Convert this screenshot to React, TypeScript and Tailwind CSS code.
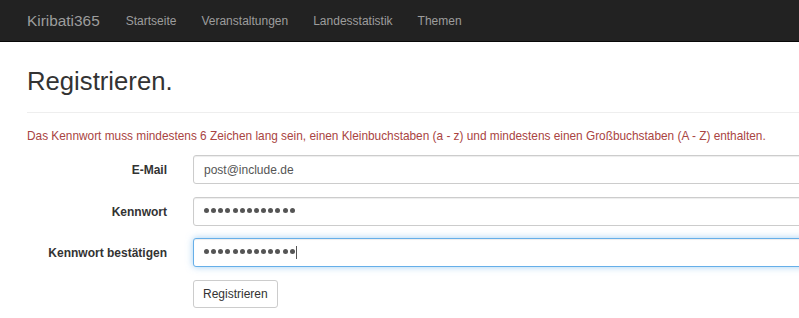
const navLinks = ['Startseite', 'Veranstaltungen', 'Landesstatistik', 'Themen']

function Dots({ count }: { count: number }) {
  return (
    <div className="flex items-center gap-[2.15px] -mt-[3px]">
      {Array.from({ length: count }).map((_, i) => (
        <span key={i} className="block w-[5px] h-[5px] rounded-full bg-[#555]" />
      ))}
    </div>
  )
}

function Field({
  label,
  focused,
  children,
  className,
}: {
  label: string
  focused?: boolean
  children: React.ReactNode
  className?: string
}) {
  return (
    <div className={`flex items-center h-[29px] ${className ?? ''}`}>
      <label className="w-[193px] shrink-0 pr-[26px] text-right font-bold text-[#333]">{label}</label>
      <div
        className={
          focused
            ? 'flex items-center h-[29px] w-[640px] shrink-0 rounded-[3px] border border-[#66afe9] bg-white pl-[10px] text-[#555] shadow-[inset_0_1px_1px_rgba(0,0,0,0.075),0_0_7px_rgba(102,175,233,0.6)]'
            : 'flex items-center h-[29px] w-[640px] shrink-0 rounded-[3px] border border-[#ccc] bg-white pl-[10px] text-[#555] shadow-[inset_0_1px_1px_rgba(0,0,0,0.075)]'
        }
      >
        {children}
      </div>
    </div>
  )
}

export default function App() {
  return (
    <div className="w-full h-[318px] overflow-hidden bg-white text-[12px] font-['Liberation_Sans',Arial,sans-serif]">
      <nav className="flex items-center h-[42px] bg-[#222] border-b border-[#080808] pl-[27px] text-[#9d9d9d]">
        <span className="text-[15.4px] mr-[26px]">Kiribati365</span>
        <div className="flex gap-[25px]">
          {navLinks.map((l) => (
            <a key={l} href="#" className="text-[#9d9d9d]">
              {l}
            </a>
          ))}
        </div>
      </nav>

      <main className="px-[27px]">
        <h2 className="mt-[25px] text-[25.7px] leading-[28px] text-[#333]">Registrieren.</h2>
        <div className="mt-[17px] border-t border-[#eee] -mr-[27px]" />
        <p className="mt-[15px] leading-[17px] whitespace-nowrap text-[11.85px] text-[#a94442]">
          Das Kennwort muss mindestens 6 Zeichen lang sein, einen Kleinbuchstaben (a - z) und mindestens einen Großbuchstaben (A - Z) enthalten.
        </p>

        <form className="-ml-[27px] mt-[10px]">
          <Field label="E-Mail">
            <span>post@include.de</span>
          </Field>
          <Field label="Kennwort" className="mt-[13px]">
            <Dots count={13} />
          </Field>
          <Field label="Kennwort bestätigen" focused className="mt-[12px]">
            <Dots count={13} />
            <span className="ml-[1px] block w-px h-[13px] bg-[#555]" />
          </Field>
          <div className="mt-[13px] pl-[193px]">
            <button
              type="button"
              className="h-[28px] rounded-[3px] border border-[#ccc] bg-white px-[9px] text-[#333]"
            >
              Registrieren
            </button>
          </div>
        </form>
      </main>
    </div>
  )
}
